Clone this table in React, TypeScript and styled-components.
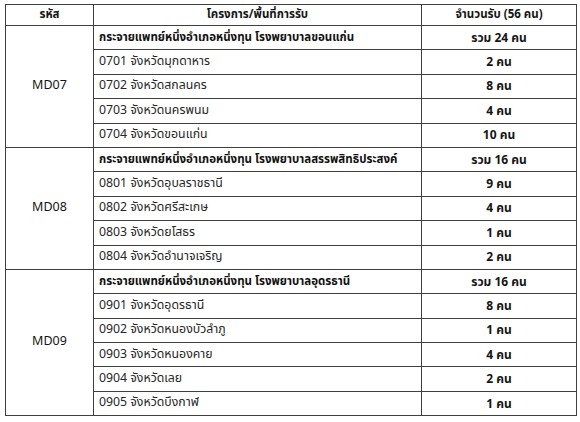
import * as React from "react";
import styled, { createGlobalStyle } from "styled-components";

const GlobalStyle = createGlobalStyle`
  html, body {
    margin: 0;
    padding: 0;
    background: #ffffff;
  }
  body {
    font-family: "Noto Sans Thai", "Noto Sans", "DejaVu Sans", sans-serif;
    color: #151515;
  }
`;

const Page = styled.div`
  width: 580px;
  height: 422px;
  padding: 4px 0 0 5px;
  box-sizing: border-box;
  overflow: hidden;
`;

const Table = styled.table`
  width: 568px;
  border-collapse: collapse;
  table-layout: fixed;
  font-size: 11.5px;
  line-height: 1;
`;

const HeadCell = styled.th<{ $width: number }>`
  width: ${(p) => p.$width}px;
  height: 20px;
  padding: 0;
  border: 1px solid #3f3f3f;
  font-weight: 700;
  text-align: center;
  vertical-align: middle;
`;

const Row = styled.tr`
  height: 24.4px;
`;

const CodeCell = styled.td`
  padding: 0;
  border: 1px solid #3f3f3f;
  text-align: center;
  vertical-align: middle;
  font-size: 12.5px;
`;

const NameCell = styled.td<{ $bold?: boolean }>`
  padding: 0 0 0 5px;
  border: 1px solid #3f3f3f;
  font-weight: ${(p) => (p.$bold ? 700 : 400)};
  font-size: ${(p) => (p.$bold ? "11.5px" : "12.3px")};
  white-space: nowrap;
  overflow: hidden;
  color: ${(p) => (p.$bold ? "#111" : "#262626")};
`;

const CountCell = styled.td`
  padding: 0;
  border: 1px solid #3f3f3f;
  text-align: center;
  font-weight: 700;
  font-size: 12px;
`;

type Group = {
  code: string;
  title: string;
  total: string;
  items: [string, string][];
};

const groups: Group[] = [
  {
    code: "MD07",
    title: "กระจายแพทย์หนึ่งอำเภอหนึ่งทุน  โรงพยาบาลขอนแก่น",
    total: "รวม 24 คน",
    items: [
      ["0701 จังหวัดมุกดาหาร", "2 คน"],
      ["0702 จังหวัดสกลนคร", "8 คน"],
      ["0703 จังหวัดนครพนม", "4 คน"],
      ["0704 จังหวัดขอนแก่น", "10 คน"],
    ],
  },
  {
    code: "MD08",
    title: "กระจายแพทย์หนึ่งอำเภอหนึ่งทุน โรงพยาบาลสรรพสิทธิประสงค์",
    total: "รวม 16 คน",
    items: [
      ["0801 จังหวัดอุบลราชธานี", "9 คน"],
      ["0802 จังหวัดศรีสะเกษ", "4 คน"],
      ["0803 จังหวัดยโสธร", "1 คน"],
      ["0804 จังหวัดอำนาจเจริญ", "2 คน"],
    ],
  },
  {
    code: "MD09",
    title: "กระจายแพทย์หนึ่งอำเภอหนึ่งทุน โรงพยาบาลอุดรธานี",
    total: "รวม 16 คน",
    items: [
      ["0901 จังหวัดอุดรธานี", "8 คน"],
      ["0902 จังหวัดหนองบัวลำภู", "1 คน"],
      ["0903 จังหวัดหนองคาย", "4 คน"],
      ["0904 จังหวัดเลย", "2 คน"],
      ["0905 จังหวัดบึงกาฬ", "1 คน"],
    ],
  },
];

const App: React.FunctionComponent = (): JSX.Element => {
  return (
    <>
      <GlobalStyle />
      <Page>
        <Table>
          <thead>
            <tr>
              <HeadCell $width={87}>รหัส</HeadCell>
              <HeadCell $width={327}>โครงการ/พื้นที่การรับ</HeadCell>
              <HeadCell $width={154}>จำนวนรับ (56 คน)</HeadCell>
            </tr>
          </thead>
          <tbody>
            {groups.map((g) => (
              <React.Fragment key={g.code}>
                <Row>
                  <CodeCell rowSpan={g.items.length + 1}>{g.code}</CodeCell>
                  <NameCell $bold>{g.title}</NameCell>
                  <CountCell>{g.total}</CountCell>
                </Row>
                {g.items.map(([name, count]) => (
                  <Row key={name}>
                    <NameCell>{name}</NameCell>
                    <CountCell>{count}</CountCell>
                  </Row>
                ))}
              </React.Fragment>
            ))}
          </tbody>
        </Table>
      </Page>
    </>
  );
};

export default App;
